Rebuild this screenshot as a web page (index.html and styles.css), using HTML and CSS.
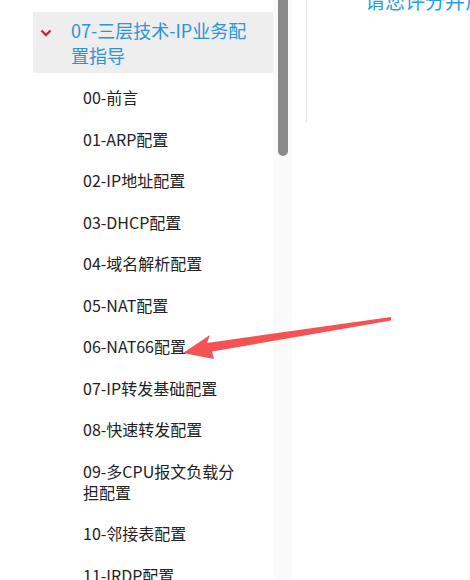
FILE: index.html
```html
<!DOCTYPE html>
<html lang="zh-CN">
<head>
    <meta charset="UTF-8">
    <meta name="viewport" content="width=device-width, initial-scale=1.0">
    <title>三层技术-IP业务配置指导</title>
    <link rel="stylesheet" href="styles.css">
</head>
<body>
    <div class="page">
        <div class="sidebar">
            <div class="group-title">
                <svg class="chevron" width="12" height="8" viewBox="0 0 12 8">
                    <polyline points="1.5,1.5 6,6 10.5,1.5" fill="none" stroke="#c8283c" stroke-width="2.4"/>
                </svg>
                <span class="group-text">07-三层技术-IP业务配置指导</span>
            </div>
            <ul class="menu">
                <li>00-前言</li>
                <li>01-ARP配置</li>
                <li>02-IP地址配置</li>
                <li>03-DHCP配置</li>
                <li>04-域名解析配置</li>
                <li>05-NAT配置</li>
                <li>06-NAT66配置</li>
                <li>07-IP转发基础配置</li>
                <li>08-快速转发配置</li>
                <li>09-多CPU报文负载分担配置</li>
                <li>10-邻接表配置</li>
                <li>11-IRDP配置</li>
            </ul>
        </div>
        <div class="track">
            <div class="thumb"></div>
        </div>
        <div class="content">
            <div class="rate">请您评分并反馈</div>
        </div>
    </div>

    <!-- 标注箭头 -->
    <svg class="arrow" width="470" height="580" viewBox="0 0 470 580">
        <polygon points="183,353 210,335 207,343 391,317 391,320.5 212,351.5 214,359" fill="#f55353"/>
    </svg>
</body>
</html>
```

FILE: styles.css
```css
* {
    margin: 0;
    padding: 0;
    box-sizing: border-box;
}

html, body {
    height: 100%;
    overflow: hidden;
}

body {
    font-family: "Noto Sans CJK SC", sans-serif;
    background: white;
    position: relative;
}

.page {
    display: flex;
    align-items: flex-start;
    height: 580px;
}

.sidebar {
    width: 273px;
    padding: 12px 0 0 33px;
    flex-shrink: 0;
}

.group-title {
    display: flex;
    align-items: flex-start;
    background: #eeeeee;
    width: 241px;
    padding: 5.5px 16px 5.5px 7px;
}

.chevron {
    margin-top: 11px;
    flex-shrink: 0;
}

.group-text {
    margin-left: 19px;
    font-size: 18px;
    line-height: 25px;
    color: #2b95d6;
}

.menu {
    list-style: none;
    margin-top: 4px;
}

.menu li {
    font-size: 16px;
    line-height: 21px;
    padding: 10.25px 23px 10.25px 50px;
    color: #222;
}

.track {
    width: 19px;
    height: 580px;
    background: #fafafa;
    padding: 0 4px 0 5px;
    flex-shrink: 0;
}

.thumb {
    height: 162px;
    margin-top: -6px;
    background: #8a8a8a;
    border-radius: 5px;
}

.content {
    margin-left: 14px;
    border-left: 1px solid #e4e4e4;
    height: 122px;
    padding-left: 58px;
    flex: 1;
    overflow: hidden;
}

.rate {
    margin-top: -9px;
    font-size: 20px;
    line-height: 20px;
    color: #2a9fe0;
    white-space: nowrap;
}

.arrow {
    position: absolute;
    left: 0;
    top: 0;
    pointer-events: none;
}
```
